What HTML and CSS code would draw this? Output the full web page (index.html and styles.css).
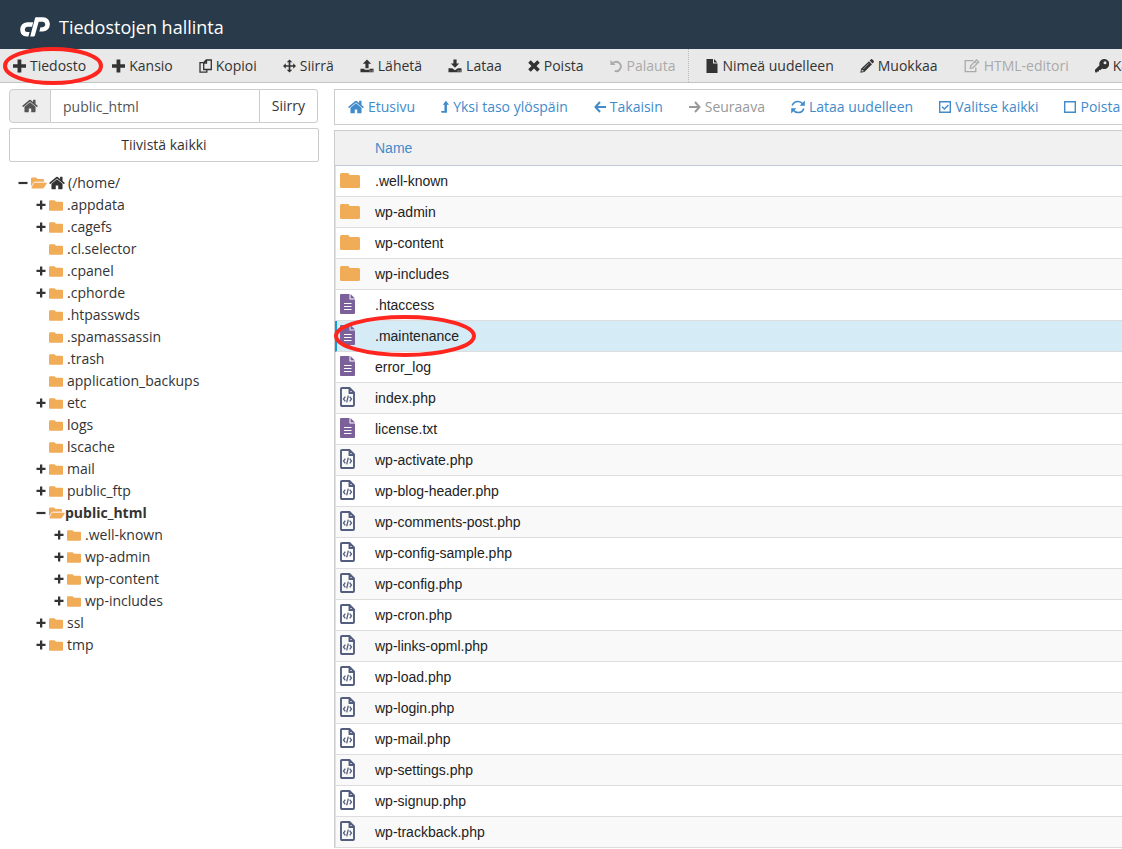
FILE: index.html
```html
<!DOCTYPE html>
<html lang="fi">
<head>
  <meta charset="utf-8">
  <meta name="viewport" content="width=device-width, initial-scale=1">
  <title>Tiedostojen hallinta</title>
  <link rel="stylesheet" href="styles.css">
</head>
<body>

<!-- icon sprite -->
<svg class="sprite" aria-hidden="true">
  <symbol id="i-plus" viewBox="1 1 12 12"><path d="M5.200 1h3.500v4.300H13v3.400H8.700V13H5.200V8.700H1V5.300h4.200z"/></symbol>
  <symbol id="i-more" viewBox="0 0 10 10"><path d="M4 .5h2.300v3.300h3.200v2.200H6.300v3.500H4V6H.5V3.800H4z"/></symbol>
  <symbol id="i-less" viewBox="0 0 10 10"><path d="M.5 3.900h9v2.200h-9z"/></symbol>
  <symbol id="i-home" viewBox="64 192 1664 1408"><path d="M1472 992v480q0 26-19 45t-45 19h-384v-384h-256v384h-384q-26 0-45-19t-19-45v-480q0-1 .5-3t.5-3l575-474 575 474q1 2 1 6zm223-69l-62 74q-8 9-21 11h-3q-13 0-21-7l-692-577-692 577q-12 8-24 7-13-2-21-11l-62-74q-8-10-7-23.500t11-21.500l719-599q32-26 76-26t76 26l244 204v-195q0-14 9-23t23-9h192q14 0 23 9t9 23v408l219 182q10 8 11 21.500t-7 23.500z"/></symbol>
  <symbol id="i-copy" viewBox="0.500 0.500 13 14"><path d="M5.200 4.200 7.700 1.500h5.100v9.500H5.200zM8 1.500v3H5.200M5 4.200H1.500v9.500h6.800v-2.500" fill="none" stroke="currentColor" stroke-width="1.300"/></symbol>
  <symbol id="i-move" viewBox="0 0 14 14"><path d="M7 0l3 3H7.900v3.100H11V4l3 3-3 3V7.900H7.900V11H10l-3 3-3-3h2.100V7.900H3V10L0 7l3-3v2.100h3.100V3H4z"/></symbol>
  <symbol id="i-upload" viewBox="0 0 15 14"><path d="M7.500 0 12 4.600H9.200v4.900H5.800V4.600H3zM.5 10h4.300v1h5.400v-1h4.300v3.700H.5zm9.800 1.800v1h1v-1zm2.200 0v1h1v-1z" fill-rule="evenodd"/></symbol>
  <symbol id="i-download" viewBox="0 0 15 14"><path d="M5.800 0h3.400v4.300H12L7.500 9 3 4.300h2.800zM.5 9.500h4l3 2 3-2h4v4.200H.5zm9.800 2.300v1h1v-1zm2.200 0v1h1v-1z" fill-rule="evenodd"/></symbol>
  <symbol id="i-times" viewBox="0.500 0.500 11 11"><path d="M3 .7 6 3.700l3-3L11.300 3l-3 3 3 3L9 11.300l-3-3-3 3L.7 9l3-3-3-3z"/></symbol>
  <symbol id="i-undo" viewBox="0 0 14 14"><path d="M3.200 3.900A5 5 0 1 1 5 12.300" fill="none" stroke="currentColor" stroke-width="2"/><path d="M.5.500V6H6z"/></symbol>
  <symbol id="i-file" viewBox="0 0 12 14"><path d="M.5 0H7v4.600h4.500V14H.5zM8 0l3.500 3.600H8z"/></symbol>
  <symbol id="i-pencil" viewBox="0 0 14 14"><path d="m9 2.300 2.700 2.700L12 5.300l-7.700 7.700L.3 13.800l.8-4zM9.700 1.600l1.100-1.100q.8-.8 1.600 0L13.600 1.700q.8.8 0 1.600l-1.100 1.100zM1.900 10.500l-.4 2.100 2.200-.4-.4-1H2.500z" fill-rule="evenodd"/><path d="M3.300 10 9 4.300" stroke="#e9e9e9" stroke-width=".6"/></symbol>
  <symbol id="i-edit" viewBox="0 0 16 14"><path d="M9.500 1.700H1.200v11h10.600V8.500M6.300 9.200l.4-2.500 5.800-5.800 2.200 2.200-5.900 5.700zM11 2.500l2.100 2.100" fill="none" stroke="currentColor" stroke-width="1.300"/></symbol>
  <symbol id="i-key" viewBox="0 0 14 14"><path d="M9 0a5 5 0 1 1-1.900 9.500L5.700 11H4v1.500H2.300L1 14l-1-1.500v-1.700l4.500-4.500A5 5 0 0 1 9 0zm1 2.300a1.500 1.500 0 1 0 0 3 1.500 1.500 0 0 0 0-3z" fill-rule="evenodd"/></symbol>
  <symbol id="i-level-up" viewBox="0 0 9 14"><path d="M5.500 0 9 4.500H6.700V13.500H.7L0 11.400h3.900V4.500H2z"/></symbol>
  <symbol id="i-left" viewBox="0 0 12 12"><path d="M6 1 1.500 6 6 11M1.500 6H12" fill="none" stroke="currentColor" stroke-width="2"/></symbol>
  <symbol id="i-right" viewBox="0 0 12 12"><path d="M6 1 10.500 6 6 11M10.500 6H0" fill="none" stroke="currentColor" stroke-width="2"/></symbol>
  <symbol id="i-refresh" viewBox="0 0 14 14"><path d="M1.200 5.600Q2.500 1.500 7 1.500q3 0 5 2.700M12.800 8.400Q11.500 12.500 7 12.500q-3 0-5-2.700" fill="none" stroke="currentColor" stroke-width="1.700"/><path d="M13.800.5v5.300H8.600zM.2 13.500V8.200h5.200z"/></symbol>
  <symbol id="i-checked" viewBox="0.500 0.500 12 12"><path d="M1.200 1.200h10.600v10.600H1.200zM3.600 6.200 6 8.600l3.900-4.200" fill="none" stroke="currentColor" stroke-width="1.400"/></symbol>
  <symbol id="i-unchecked" viewBox="0.500 0.500 12 12"><path d="M1.200 1.200h10.600v10.600H1.200z" fill="none" stroke="currentColor" stroke-width="1.400"/></symbol>
  <symbol id="i-folder" viewBox="0 0 20 15"><path d="M1.500 0h6q1 0 1.500.8l.7 1.200h8.800q1.500 0 1.500 1.500v10q0 1.500-1.500 1.500h-17Q0 15 0 13.500v-12Q0 0 1.500 0z"/></symbol>
  <symbol id="i-folder-open" viewBox="0 0 16 12"><path d="M1 .5h4L6.500 2H12q1 0 1 1v1.800H4.200Q3 4.800 2.300 5.900L0 9.200V1.500q0-1 1-1z"/><path d="M3.800 5.700H15.500q.6.200.2.900l-2.600 4q-.5.900-1.600.9H1q-.9-.2-.4-.9l2-4q.4-.9 1.200-.9z"/><path d="M.3 9.300 2.400 6q.6-1 1.500-1H14" fill="none" stroke="#f7cfc0" stroke-width=".8"/></symbol>
  <symbol id="i-text" viewBox="0 0 15 20"><path d="M1 0h8.500v5.500H15V19q0 1-1 1H1q-1 0-1-1V1q0-1 1-1zM10.500 0 15 4.500h-4.500z"/><path d="M4 9.500h7.500M4 12.500h7.500M4 15.500h7.500" stroke="#fff" stroke-width="1.200"/></symbol>
  <symbol id="i-code" viewBox="0 0 15 20"><path d="M2 1h7.500L14 5.500V18q0 1-1 1H2q-1 0-1-1V2q0-1 1-1zM9.500 1v5H14" fill="none" stroke="currentColor" stroke-width="1.900"/><path d="M5.300 9.700 3.500 12l1.800 2.300M9.700 9.700l1.800 2.300-1.800 2.300M8.300 8.700 6.700 15.300" fill="none" stroke="currentColor" stroke-width="1.300"/></symbol>
</svg>

<header class="header">
  <svg class="logo" viewBox="0 0 30 21" aria-label="cPanel"><path d="M13.200 5.300 12 9.700H7.300Q5.100 9.900 4.800 12.400 4.800 14.900 7.200 15.100H9.600L8.400 19.500H6.700Q.6 19.200.2 13 .3 6 7.200 5.300z"/><path d="M16 .3h7Q29.500.8 29.900 7 29.700 13.800 23 14.600H19.300L20.500 10.200H22.900Q25.100 9.900 25.300 7.500 25.100 5 22.800 4.700H18.700L14.900 18.600Q14.500 19.500 13.500 19.500H10.200L15 1.300Q15.200.4 16 .3z"/></svg>
  <h1 class="title">Tiedostojen hallinta</h1>
</header>

<nav class="toolbar">
  <button class="tool marked"><svg class="icon"><use href="#i-plus"/></svg>Tiedosto<svg class="ring ring-tool"><ellipse cx="50%" cy="50%" rx="48" ry="17"/></svg></button>
  <button class="tool"><svg class="icon"><use href="#i-plus"/></svg>Kansio</button>
  <button class="tool"><svg class="icon"><use href="#i-copy"/></svg>Kopioi</button>
  <button class="tool"><svg class="icon"><use href="#i-move"/></svg>Siirrä</button>
  <button class="tool"><svg class="icon medium"><use href="#i-upload"/></svg>Lähetä</button>
  <button class="tool"><svg class="icon medium"><use href="#i-download"/></svg>Lataa</button>
  <button class="tool"><svg class="icon small"><use href="#i-times"/></svg>Poista</button>
  <button class="tool" disabled><svg class="icon"><use href="#i-undo"/></svg>Palauta</button>
  <div class="tool-group">
    <button class="tool"><svg class="icon small"><use href="#i-file"/></svg>Nimeä uudelleen</button>
    <button class="tool"><svg class="icon medium"><use href="#i-pencil"/></svg>Muokkaa</button>
    <button class="tool" disabled><svg class="icon wide"><use href="#i-edit"/></svg>HTML-editori</button>
    <button class="tool"><svg class="icon medium"><use href="#i-key"/></svg>Käyttöoikeudet</button>
  </div>
</nav>

<div class="content">
  <aside class="sidebar">
    <form class="path">
      <button class="path-home" type="button" aria-label="Etusivu"><svg class="icon wide"><use href="#i-home"/></svg></button>
      <input class="path-input" type="text" value="public_html" aria-label="Polku">
      <button class="path-go" type="button">Siirry</button>
    </form>
    <button class="collapse">Tiivistä kaikki</button>

    <ul class="tree">
      <li><a class="node" href="#"><svg class="toggle"><use href="#i-less"/></svg><svg class="dir open"><use href="#i-folder-open"/></svg><svg class="root-home"><use href="#i-home"/></svg>(/home/</a>
        <ul>
          <li><a class="node" href="#"><svg class="toggle"><use href="#i-more"/></svg><svg class="dir"><use href="#i-folder"/></svg>.appdata</a></li>
          <li><a class="node" href="#"><svg class="toggle"><use href="#i-more"/></svg><svg class="dir"><use href="#i-folder"/></svg>.cagefs</a></li>
          <li><a class="node" href="#"><svg class="toggle"></svg><svg class="dir"><use href="#i-folder"/></svg>.cl.selector</a></li>
          <li><a class="node" href="#"><svg class="toggle"><use href="#i-more"/></svg><svg class="dir"><use href="#i-folder"/></svg>.cpanel</a></li>
          <li><a class="node" href="#"><svg class="toggle"><use href="#i-more"/></svg><svg class="dir"><use href="#i-folder"/></svg>.cphorde</a></li>
          <li><a class="node" href="#"><svg class="toggle"></svg><svg class="dir"><use href="#i-folder"/></svg>.htpasswds</a></li>
          <li><a class="node" href="#"><svg class="toggle"></svg><svg class="dir"><use href="#i-folder"/></svg>.spamassassin</a></li>
          <li><a class="node" href="#"><svg class="toggle"></svg><svg class="dir"><use href="#i-folder"/></svg>.trash</a></li>
          <li><a class="node" href="#"><svg class="toggle"></svg><svg class="dir"><use href="#i-folder"/></svg>application_backups</a></li>
          <li><a class="node" href="#"><svg class="toggle"><use href="#i-more"/></svg><svg class="dir"><use href="#i-folder"/></svg>etc</a></li>
          <li><a class="node" href="#"><svg class="toggle"></svg><svg class="dir"><use href="#i-folder"/></svg>logs</a></li>
          <li><a class="node" href="#"><svg class="toggle"></svg><svg class="dir"><use href="#i-folder"/></svg>lscache</a></li>
          <li><a class="node" href="#"><svg class="toggle"><use href="#i-more"/></svg><svg class="dir"><use href="#i-folder"/></svg>mail</a></li>
          <li><a class="node" href="#"><svg class="toggle"><use href="#i-more"/></svg><svg class="dir"><use href="#i-folder"/></svg>public_ftp</a></li>
          <li><a class="node current" href="#"><svg class="toggle"><use href="#i-less"/></svg><svg class="dir open"><use href="#i-folder-open"/></svg>public_html</a>
            <ul>
              <li><a class="node" href="#"><svg class="toggle"><use href="#i-more"/></svg><svg class="dir"><use href="#i-folder"/></svg>.well-known</a></li>
              <li><a class="node" href="#"><svg class="toggle"><use href="#i-more"/></svg><svg class="dir"><use href="#i-folder"/></svg>wp-admin</a></li>
              <li><a class="node" href="#"><svg class="toggle"><use href="#i-more"/></svg><svg class="dir"><use href="#i-folder"/></svg>wp-content</a></li>
              <li><a class="node" href="#"><svg class="toggle"><use href="#i-more"/></svg><svg class="dir"><use href="#i-folder"/></svg>wp-includes</a></li>
            </ul>
          </li>
          <li><a class="node" href="#"><svg class="toggle"><use href="#i-more"/></svg><svg class="dir"><use href="#i-folder"/></svg>ssl</a></li>
          <li><a class="node" href="#"><svg class="toggle"><use href="#i-more"/></svg><svg class="dir"><use href="#i-folder"/></svg>tmp</a></li>
        </ul>
      </li>
    </ul>
  </aside>

  <main class="main">
    <div class="actions">
      <button class="action"><svg class="icon wide"><use href="#i-home"/></svg>Etusivu</button>
      <button class="action"><svg class="icon narrow"><use href="#i-level-up"/></svg>Yksi taso ylöspäin</button>
      <button class="action"><svg class="icon small"><use href="#i-left"/></svg>Takaisin</button>
      <button class="action" disabled><svg class="icon small"><use href="#i-right"/></svg>Seuraava</button>
      <button class="action"><svg class="icon medium"><use href="#i-refresh"/></svg>Lataa uudelleen</button>
      <button class="action"><svg class="icon small"><use href="#i-checked"/></svg>Valitse kaikki</button>
      <button class="action"><svg class="icon small"><use href="#i-unchecked"/></svg>Poista</button>
    </div>

    <table class="files">
      <thead>
        <tr><th class="type"></th><th>Name</th></tr>
      </thead>
      <tbody>
        <tr><td><svg class="ficon folder"><use href="#i-folder"/></svg></td><td>.well-known</td></tr>
        <tr><td><svg class="ficon folder"><use href="#i-folder"/></svg></td><td>wp-admin</td></tr>
        <tr><td><svg class="ficon folder"><use href="#i-folder"/></svg></td><td>wp-content</td></tr>
        <tr><td><svg class="ficon folder"><use href="#i-folder"/></svg></td><td>wp-includes</td></tr>
        <tr><td><svg class="ficon text"><use href="#i-text"/></svg></td><td>.htaccess</td></tr>
        <tr class="selected"><td><svg class="ficon text"><use href="#i-text"/></svg></td><td><span class="marked">.maintenance<svg class="ring ring-file"><ellipse cx="50%" cy="50%" rx="69" ry="19"/></svg></span></td></tr>
        <tr><td><svg class="ficon text"><use href="#i-text"/></svg></td><td>error_log</td></tr>
        <tr><td><svg class="ficon code"><use href="#i-code"/></svg></td><td>index.php</td></tr>
        <tr><td><svg class="ficon text"><use href="#i-text"/></svg></td><td>license.txt</td></tr>
        <tr><td><svg class="ficon code"><use href="#i-code"/></svg></td><td>wp-activate.php</td></tr>
        <tr><td><svg class="ficon code"><use href="#i-code"/></svg></td><td>wp-blog-header.php</td></tr>
        <tr><td><svg class="ficon code"><use href="#i-code"/></svg></td><td>wp-comments-post.php</td></tr>
        <tr><td><svg class="ficon code"><use href="#i-code"/></svg></td><td>wp-config-sample.php</td></tr>
        <tr><td><svg class="ficon code"><use href="#i-code"/></svg></td><td>wp-config.php</td></tr>
        <tr><td><svg class="ficon code"><use href="#i-code"/></svg></td><td>wp-cron.php</td></tr>
        <tr><td><svg class="ficon code"><use href="#i-code"/></svg></td><td>wp-links-opml.php</td></tr>
        <tr><td><svg class="ficon code"><use href="#i-code"/></svg></td><td>wp-load.php</td></tr>
        <tr><td><svg class="ficon code"><use href="#i-code"/></svg></td><td>wp-login.php</td></tr>
        <tr><td><svg class="ficon code"><use href="#i-code"/></svg></td><td>wp-mail.php</td></tr>
        <tr><td><svg class="ficon code"><use href="#i-code"/></svg></td><td>wp-settings.php</td></tr>
        <tr><td><svg class="ficon code"><use href="#i-code"/></svg></td><td>wp-signup.php</td></tr>
        <tr><td><svg class="ficon code"><use href="#i-code"/></svg></td><td>wp-trackback.php</td></tr>
      </tbody>
    </table>
  </main>
</div>

</body>
</html>
```
FILE: styles.css
```css
*{
  box-sizing: border-box;
}
body{
  margin: 0;
  overflow-x: hidden;
  background-color: #fff;
  color: #333;
  font-family: "Open Sans", sans-serif;
  font-size: 14px;
  line-height: 22px;
}
button, input{
  font: inherit;
  color: inherit;
}
button{
  cursor: pointer;
}
svg{
  display: block;
  flex-shrink: 0;
  fill: currentColor;
}
.sprite{
  display: none;
}

/* header */
.header{
  display: flex;
  align-items: center;
  gap: 9px;
  padding: 14px 20px 9px;
  background-color: #293a4a;
  color: #fff;
}
.logo{
  width: 30px;
  height: 21px;
}
.title{
  margin: 0;
  font-size: 18px;
  font-weight: 400;
  line-height: 26px;
}

/* main toolbar */
.toolbar{
  display: flex;
  border-bottom: 1px solid #c4c4c4;
  background-color: #e9e9e9;
}
.tool-group{
  display: flex;
  padding-left: 4px;
  border-left: 1px dotted #bbb;
}
.tool,
.action{
  display: flex;
  flex-shrink: 0;
  align-items: center;
  gap: 4px;
  padding: 6px 13px 5px;
  border: 0;
  background: none;
  white-space: nowrap;
}
.tool:disabled{
  color: #aaa;
}
.action:disabled{
  color: #999;
}
.icon{
  width: 13px;
  height: 14px;
}
.icon.wide{
  width: 16px;
}
.icon.medium{
  width: 14px;
}
.icon.small{
  width: 12px;
}
.icon.narrow{
  width: 8px;
}

/* red markers */
.marked{
  position: relative;
}
.ring{
  position: absolute;
  top: 50%;
  left: 50%;
  transform: translate(-50%, -50%);
  fill: none;
  stroke: #ff261f;
  stroke-width: 4px;
  pointer-events: none;
}
.ring-tool{
  width: 100px;
  height: 40px;
  margin-left: 3px;
}
.ring-file{
  width: 144px;
  height: 44px;
  margin-left: -12px;
}

.content{
  display: flex;
  gap: 15px;
  padding: 6px 0 0 9px;
}

/* sidebar */
.sidebar{
  flex: 0 0 310px;
}
.path{
  display: flex;
  margin: 0 1px 5px 0;
}
.path-home,
.path-input,
.path-go,
.collapse{
  height: 34px;
  border: 1px solid #ccc;
  background-color: #fff;
}
.path-home{
  width: 42px;
  padding: 0 12px;
  border-radius: 4px 0 0 4px;
  background-color: #eee;
  color: #555;
}
.path-input{
  flex: 1;
  min-width: 0;
  padding: 0 12px;
  border-width: 1px 0;
  color: #555;
}
.path-go{
  padding: 0 12px;
  border-radius: 0 3px 3px 0;
}
.collapse{
  width: 100%;
  border-radius: 2px;
}
.tree{
  margin: 10px 0 0 9px;
}
.tree,
.tree ul{
  padding: 0;
  list-style: none;
}
.tree ul{
  margin: 0 0 0 18px;
}
.node{
  display: flex;
  align-items: center;
  color: #333;
  text-decoration: none;
}
.current{
  font-weight: 700;
}
.toggle{
  width: 10px;
  height: 10px;
  margin-right: 3px;
}
.dir{
  width: 14px;
  height: 11px;
  margin-right: 4px;
  color: #f1ac57;
}
.dir.open{
  width: 16px;
  height: 12px;
  margin-right: 2px;
}
.current .dir{
  margin-right: 0;
}
.root-home{
  width: 16px;
  height: 14px;
  margin-right: 3px;
}

/* file list */
.main{
  flex: 1;
  min-width: 0;
}
.actions{
  display: flex;
  margin-bottom: 5px;
  border: 1px solid #ccc;
  border-right: 0;
  color: #428bca;
}
.action{
  padding: 6px 13px;
}
.files{
  width: 100%;
  border-collapse: separate;
  border-spacing: 0;
  border: 1px solid #ccc;
  border-width: 1px 0 0 1px;
  font-family: "Liberation Sans", Arial, sans-serif;
  font-size: 14px;
}
.files th{
  height: 35px;
  padding: 0 4px;
  border-bottom: 1px solid #bfc9d3;
  background-color: #f1f1f1;
  color: #428bca;
  font-weight: 400;
  text-align: left;
}
.files .type{
  width: 36px;
}
.files td{
  height: 31px;
  padding: 0 4px;
  border-bottom: 1px solid #ddd;
  color: #222;
}
.files td:first-child{
  padding-bottom: 2px;
  border-left: 1px solid #d5e5f5;
}
.files tbody tr:nth-child(even){
  background-color: #f9f9f9;
}
.files tbody tr.selected{
  background-color: #d5ebf6;
}
.files .selected td:first-child{
  padding-left: 3px;
  border-left: 2px solid #179bd3;
}
.ficon{
  width: 15px;
  height: 20px;
}
.ficon.folder{
  width: 20px;
  height: 15px;
  color: #f1ac57;
}
.ficon.text{
  color: #7b609a;
}
.ficon.code{
  color: #535e7e;
}
```
